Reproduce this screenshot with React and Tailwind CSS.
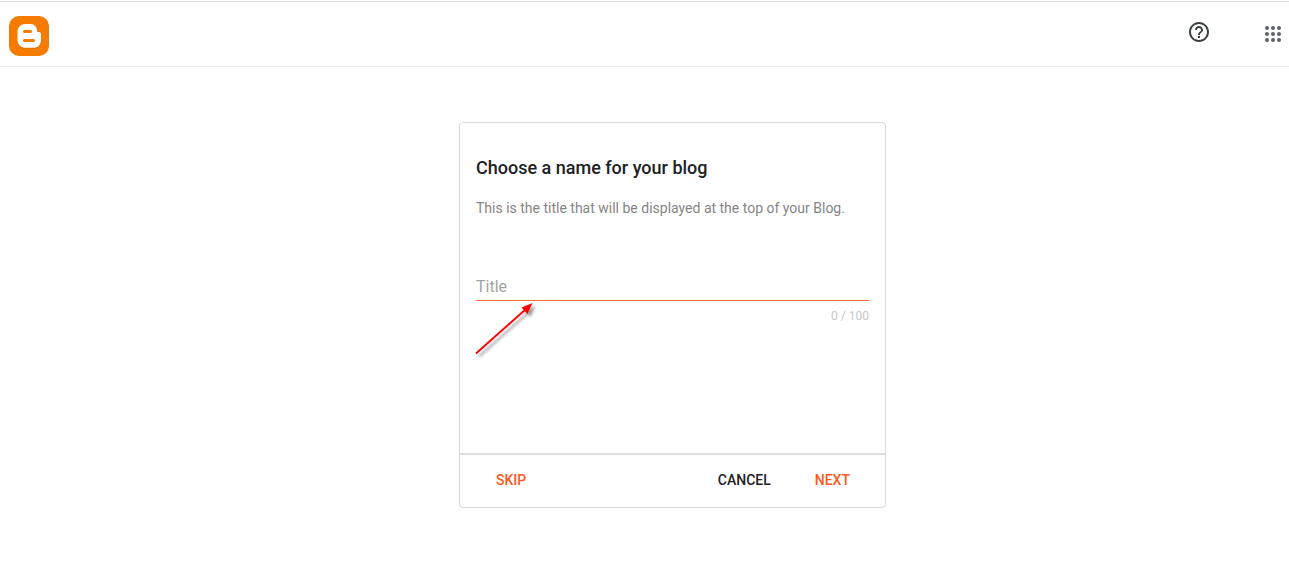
import { useState } from 'react';
import { MdHelpOutline } from 'react-icons/md';

const MAX_TITLE = 100;

function BloggerLogo() {
  return (
    <svg viewBox="0 0 40 40" className="w-10 h-10" aria-hidden="true">
      <rect width="40" height="40" rx="10" fill="#f57c00" />
      <path
        fill="#e06c00"
        d="M16 9h5.500c4 0 6.500 3 6.500 6.500c0 1.200.6 1.600 1.700 1.600c1.300 0 2.300.8 2.300 2v6.200c0 4-2.800 7.500-7 7.500h-9c-4 0-7.500-3.500-7.500-7.500v-8.800c0-4 3.500-7.500 7.500-7.500z"
      />
      <path
        fill="#fff"
        d="M16 8h5.500c4 0 6.500 3 6.500 6.500c0 1.200.6 1.600 1.700 1.600c1.300 0 2.300.8 2.300 2v6.200c0 4-2.800 7.500-7 7.500h-9c-4 0-7.500-3.500-7.500-7.500v-8.800c0-4 3.500-7.500 7.500-7.500z"
      />
      <path stroke="#f57c00" strokeWidth="3" strokeLinecap="round" d="M15.500 15.500h6M15.500 24.500h9" />
    </svg>
  );
}

function AppsIcon() {
  const steps = [6, 12, 18];
  return (
    <svg viewBox="0 0 24 24" className="w-6 h-6" fill="#5f6368" aria-hidden="true">
      {steps.map((y) => steps.map((x) => <circle key={`${x}-${y}`} cx={x} cy={y} r="2" />))}
    </svg>
  );
}

// Red callout arrow that points at the title field.
function Arrow() {
  return (
    <svg viewBox="0 0 64 60" className="absolute left-0 top-full w-16 h-[60px] overflow-visible pointer-events-none" aria-hidden="true">
      <defs>
        <filter id="arrow-shadow" x="-20%" y="-20%" width="150%" height="150%">
          <feDropShadow dx="3" dy="3" stdDeviation="1.500" floodColor="#000" floodOpacity="0.400" />
        </filter>
      </defs>
      <g filter="url(#arrow-shadow)">
        <path stroke="#f00" strokeWidth="1.800" d="M0 52.500L50 8" />
        <path fill="#f00" d="M56.500 2L51.500 13L45.500 6.500z" />
      </g>
    </svg>
  );
}

export default function App() {
  const [title, setTitle] = useState('');

  return (
    <div className="min-h-screen bg-white font-['Roboto',sans-serif]">
      <header className="mt-px flex items-center justify-between h-[66px] pl-[9px] pr-1 pt-1 border-t border-t-[#dadce0] border-b border-b-[#ececec]">
        <a href="#" aria-label="Blogger">
          <BloggerLogo />
        </a>
        <div className="flex items-center gap-[50px] pb-1">
          <button type="button" aria-label="Help" className="pb-1 text-[#3c4043]">
            <MdHelpOutline className="w-6 h-6" />
          </button>
          <button type="button" aria-label="Google apps">
            <AppsIcon />
          </button>
        </div>
      </header>

      <main className="flex justify-center pl-14 pt-[55px]">
        <form className="w-full max-w-[427px] rounded border border-[#d3dbde]" onSubmit={(e) => e.preventDefault()}>
          <div className="px-4 pt-[33px] pb-[127px]">
            <h1 className="text-lg leading-6 font-medium text-[#202124]">Choose a name for your blog</h1>
            <p className="mt-[18px] text-sm leading-5 text-[#858585]">
              This is the title that will be displayed at the top of your Blog.
            </p>
            <div className="relative mt-14">
              <input
                type="text"
                aria-label="Title"
                placeholder="Title"
                maxLength={MAX_TITLE}
                value={title}
                onChange={(e) => setTitle(e.target.value)}
                className="block w-full h-[27px] pb-0.5 text-base leading-6 text-[#202124] placeholder:text-[#a3a3a3] border-b border-[#ff6a35] outline-none"
              />
              <Arrow />
            </div>
            <p className="mt-[5px] h-5 text-right text-xs leading-5 text-[#c8c8c8]">
              {title.length} / {MAX_TITLE}
            </p>
          </div>
          <div className="flex items-center h-[54px] pl-7 pr-[27px] pb-0.5 border-t-2 border-[#dedede] text-sm font-medium">
            <button type="button" className="px-2 text-[#ff5722]">SKIP</button>
            <button type="button" className="ml-auto px-2 text-[#202124]">CANCEL</button>
            <button type="submit" className="ml-7 px-2 text-[#ff5722]">NEXT</button>
          </div>
        </form>
      </main>
    </div>
  );
}
